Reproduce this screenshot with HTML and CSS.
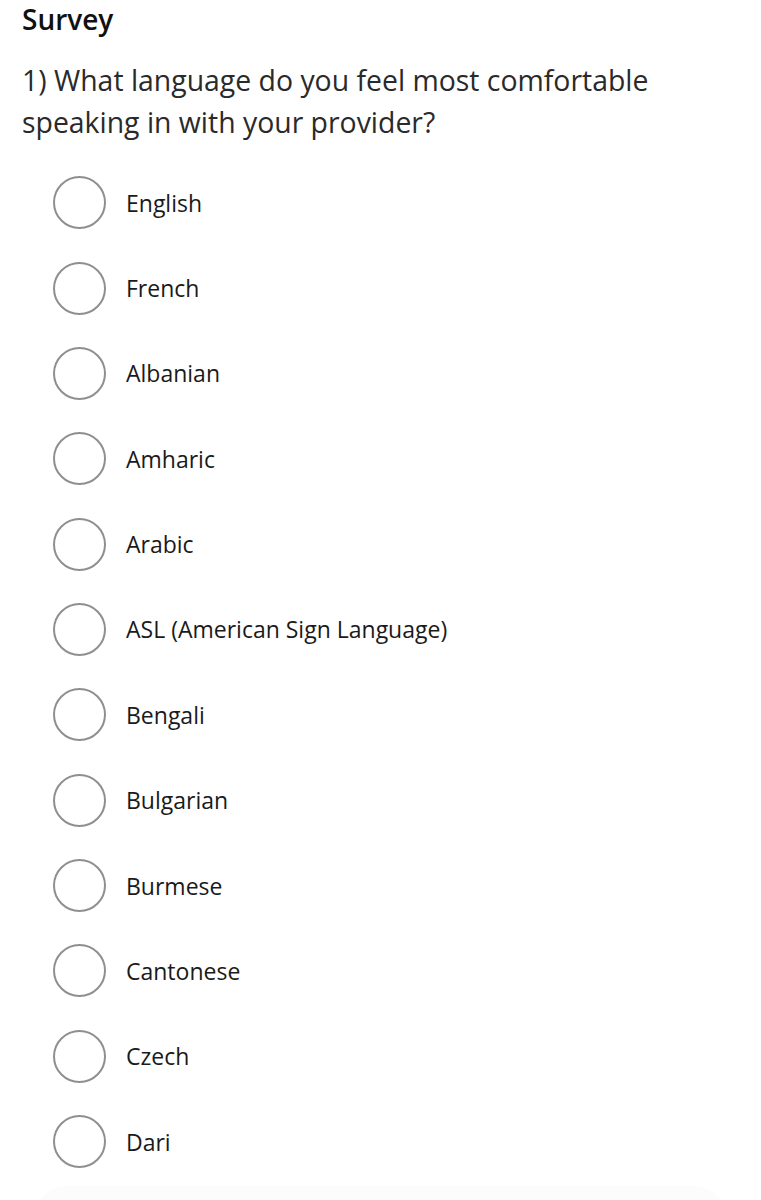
FILE: index.html
```html
<!DOCTYPE html>
<html>
<head>
<meta charset="utf-8">
<link rel="stylesheet" href="styles.css">
</head>
<body>
<div class="page">
  <h1 class="title">Survey</h1>
  <p class="question">1) What language do you feel most comfortable speaking in with your provider?</p>
  <ul class="options">
    <li class="option"><span class="radio"></span><span class="label">English</span></li>
    <li class="option"><span class="radio"></span><span class="label">French</span></li>
    <li class="option"><span class="radio"></span><span class="label">Albanian</span></li>
    <li class="option"><span class="radio"></span><span class="label">Amharic</span></li>
    <li class="option"><span class="radio"></span><span class="label">Arabic</span></li>
    <li class="option"><span class="radio"></span><span class="label">ASL (American Sign Language)</span></li>
    <li class="option"><span class="radio"></span><span class="label">Bengali</span></li>
    <li class="option"><span class="radio"></span><span class="label">Bulgarian</span></li>
    <li class="option"><span class="radio"></span><span class="label">Burmese</span></li>
    <li class="option"><span class="radio"></span><span class="label">Cantonese</span></li>
    <li class="option"><span class="radio"></span><span class="label">Czech</span></li>
    <li class="option"><span class="radio"></span><span class="label">Dari</span></li>
  </ul>
  <div class="next-card"></div>
</div>
</body>
</html>
```
FILE: styles.css
```css
html, body {
  margin: 0;
  padding: 0;
  background: #ffffff;
}
body {
  font-family: "Open Sans", "Liberation Sans", sans-serif;
  color: #1a1a1a;
  overflow: hidden;
  height: 1200px;
}
.page {
  padding-left: 22px;
}
.title {
  margin: 0;
  font-size: 28px;
  font-weight: 600;
  line-height: 38px;
  color: #111;
}
.question {
  margin: 21px 0 0 0;
  font-size: 28.4px;
  font-weight: 400;
  line-height: 42px;
  color: #2a2a2a;
  width: 700px;
}
.options {
  list-style: none;
  margin: 17px 0 0 0;
  padding: 0 0 0 31px;
}
.option {
  display: flex;
  align-items: center;
  height: 85.36px;
  gap: 20px;
}
.radio {
  box-sizing: border-box;
  width: 53px;
  height: 53px;
  border: 2px solid #8f8f8f;
  border-radius: 50%;
  flex: none;
}
.label {
  font-size: 23px;
  color: #1a1a1a;
}
.next-card {
  margin: 2px 36px 0 14px;
  height: 40px;
  background: #fcfcfc;
  border-radius: 30px 30px 0 0;
}
```
